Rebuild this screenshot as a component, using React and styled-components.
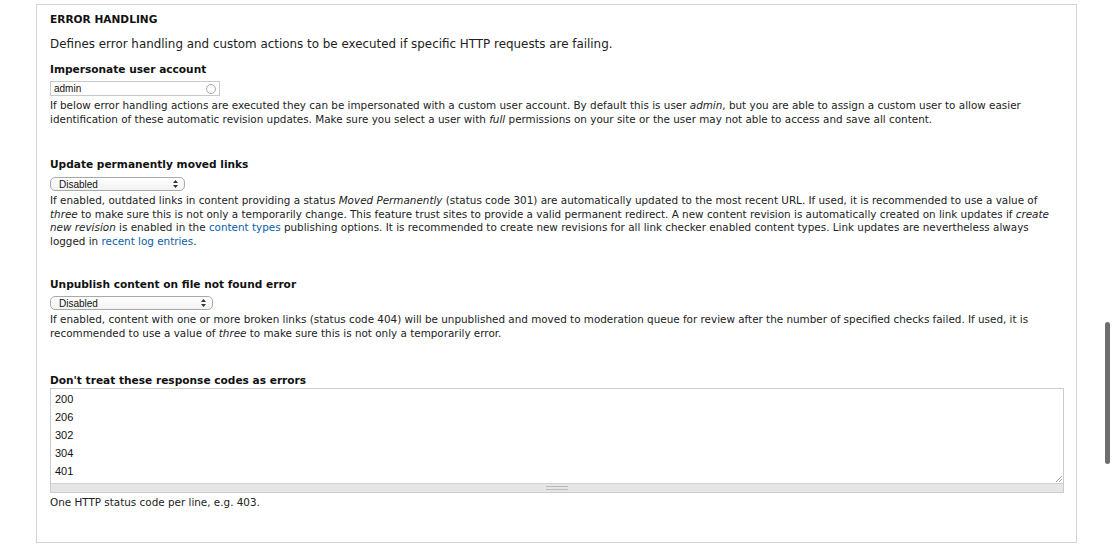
import React from 'react'
import styled, { createGlobalStyle } from 'styled-components'

const GlobalStyle = createGlobalStyle`
  html, body {
    margin: 0;
    padding: 0;
    background: #fff;
  }
  body {
    font-family: "DejaVu Sans", "Open Sans", sans-serif;
    color: #222;
    overflow: hidden;
  }
`;

const Page = styled.div`
  position: relative;
  width: 1114px;
  height: 553px;
  padding-top: 4px;
  box-sizing: border-box;
`;

const Fieldset = styled.section`
  margin-left: 36px;
  width: 1041px;
  height: 539px;
  box-sizing: border-box;
  border: 1px solid #d4d4d4;
  padding: 0 13px;
  display: flex;
  flex-direction: column;
`;

const Legend = styled.h2`
  margin: 7px 0 0;
  font-size: 10.6px;
  line-height: 14px;
  font-weight: bold;
  color: #111;
`;

const Intro = styled.p`
  margin: 11px 0 0;
  font-size: 11.9px;
  line-height: 14px;
  color: #222;
`;

const Label = styled.label`
  display: block;
  margin-top: ${p => p.$gap}px;
  font-size: 10.6px;
  line-height: 14px;
  font-weight: bold;
  color: #111;
`;

const Help = styled.div`
  margin-top: ${p => p.$gap || 3}px;
  font-size: 10.4px;
  line-height: 13.5px;
  color: #222;
  white-space: nowrap;

  em { font-style: italic; }
  a { color: #0a5ea8; text-decoration: none; }
`;

const AutoInput = styled.div`
  margin-top: 5px;
  width: 170px;
  height: 15px;
  box-sizing: border-box;
  border: 1px solid #c8c8c8;
  display: flex;
  align-items: center;
  justify-content: space-between;
  padding: 0 3px 0 3px;
  font-family: "Liberation Sans", Arial, sans-serif;
  font-size: 10px;
  color: #111;
`;

const Throbber = styled.span`
  width: 10px;
  height: 10px;
  border-radius: 50%;
  border: 1px solid #a8a8a8;
  box-sizing: border-box;
`;

const Select = styled.div`
  margin-top: ${p => p.$gap}px;
  width: ${p => p.$width}px;
  height: 14px;
  box-sizing: border-box;
  border: 1px solid #a9a9a9;
  border-radius: 5px;
  background: linear-gradient(#fff, #f3f3f3);
  display: flex;
  align-items: center;
  justify-content: space-between;
  padding: 0 6px 0 8px;
  font-family: "Liberation Sans", Arial, sans-serif;
  font-size: 10px;
  color: #111;
`;

const Arrows = styled.svg`
  width: 5px;
  height: 8px;
`;

const TextArea = styled.div`
  margin-top: 1px;
  width: 1014px;
  box-sizing: border-box;
  border: 1px solid #ccc;
`;

const Lines = styled.div`
  position: relative;
  height: 93px;
  padding: 1px 4px 0;
  font-family: "Liberation Sans", Arial, sans-serif;
  font-size: 11px;
  line-height: 18px;
  color: #111;
`;

const Corner = styled.svg`
  position: absolute;
  right: 1px;
  bottom: 1px;
  width: 7px;
  height: 7px;
`;

const Grippie = styled.div`
  height: 8px;
  background: #e6e6e6;
  border-top: 1px solid #d0d0d0;
  display: flex;
  align-items: center;
  padding-left: 495px;

  span {
    width: 22px;
    height: 2px;
    border-top: 1px solid #b8b8b8;
    border-bottom: 1px solid #b8b8b8;
  }
`;

const Scrollbar = styled.div`
  position: absolute;
  right: 4px;
  top: 322px;
  width: 5px;
  height: 142px;
  border-radius: 3px;
  background: #6e6e6e;
`;

const SelectArrows = () => (
  <Arrows viewBox="0 0 5 8">
    <path d="M2.5 0 L5 3 L0 3 Z M2.5 8 L5 5 L0 5 Z" fill="#333" />
  </Arrows>
);

export default function App() {
  const codes = ['200', '206', '302', '304', '401'];
  return (
    <Page>
      <GlobalStyle />
      <Fieldset>
        <Legend>ERROR HANDLING</Legend>
        <Intro>Defines error handling and custom actions to be executed if specific HTTP requests are failing.</Intro>

        <Label $gap={11}>Impersonate user account</Label>
        <AutoInput>admin<Throbber /></AutoInput>
        <Help>
          If below error handling actions are executed they can be impersonated with a custom user account. By default this is user <em>admin</em>, but you are able to assign a custom user to allow easier<br />
          identification of these automatic revision updates. Make sure you select a user with <em>full</em> permissions on your site or the user may not able to access and save all content.
        </Help>

        <Label $gap={31}>Update permanently moved links</Label>
        <Select $gap={6} $width={135}>Disabled<SelectArrows /></Select>
        <Help>
          If enabled, outdated links in content providing a status <em>Moved Permanently</em> (status code 301) are automatically updated to the most recent URL. If used, it is recommended to use a value of<br />
          <em>three</em> to make sure this is not only a temporarily change. This feature trust sites to provide a valid permanent redirect. A new content revision is automatically created on link updates if <em>create</em><br />
          <em>new revision</em> is enabled in the <a href="#">content types</a> publishing options. It is recommended to create new revisions for all link checker enabled content types. Link updates are nevertheless always<br />
          logged in <a href="#">recent log entries</a>.
        </Help>

        <Label $gap={29}>Unpublish content on file not found error</Label>
        <Select $gap={5} $width={163}>Disabled<SelectArrows /></Select>
        <Help>
          If enabled, content with one or more broken links (status code 404) will be unpublished and moved to moderation queue for review after the number of specified checks failed. If used, it is<br />
          recommended to use a value of <em>three</em> to make sure this is not only a temporarily error.
        </Help>

        <Label $gap={33}>Don't treat these response codes as errors</Label>
        <TextArea>
          <Lines>
            {codes.map(c => <div key={c}>{c}</div>)}
            <Corner viewBox="0 0 7 7">
              <path d="M1 7 L7 1 M4 7 L7 4" stroke="#888" strokeWidth="0.8" />
            </Corner>
          </Lines>
          <Grippie><span /></Grippie>
        </TextArea>
        <Help $gap={3}>One HTTP status code per line, e.g. 403.</Help>
      </Fieldset>
      <Scrollbar />
    </Page>
  );
}
